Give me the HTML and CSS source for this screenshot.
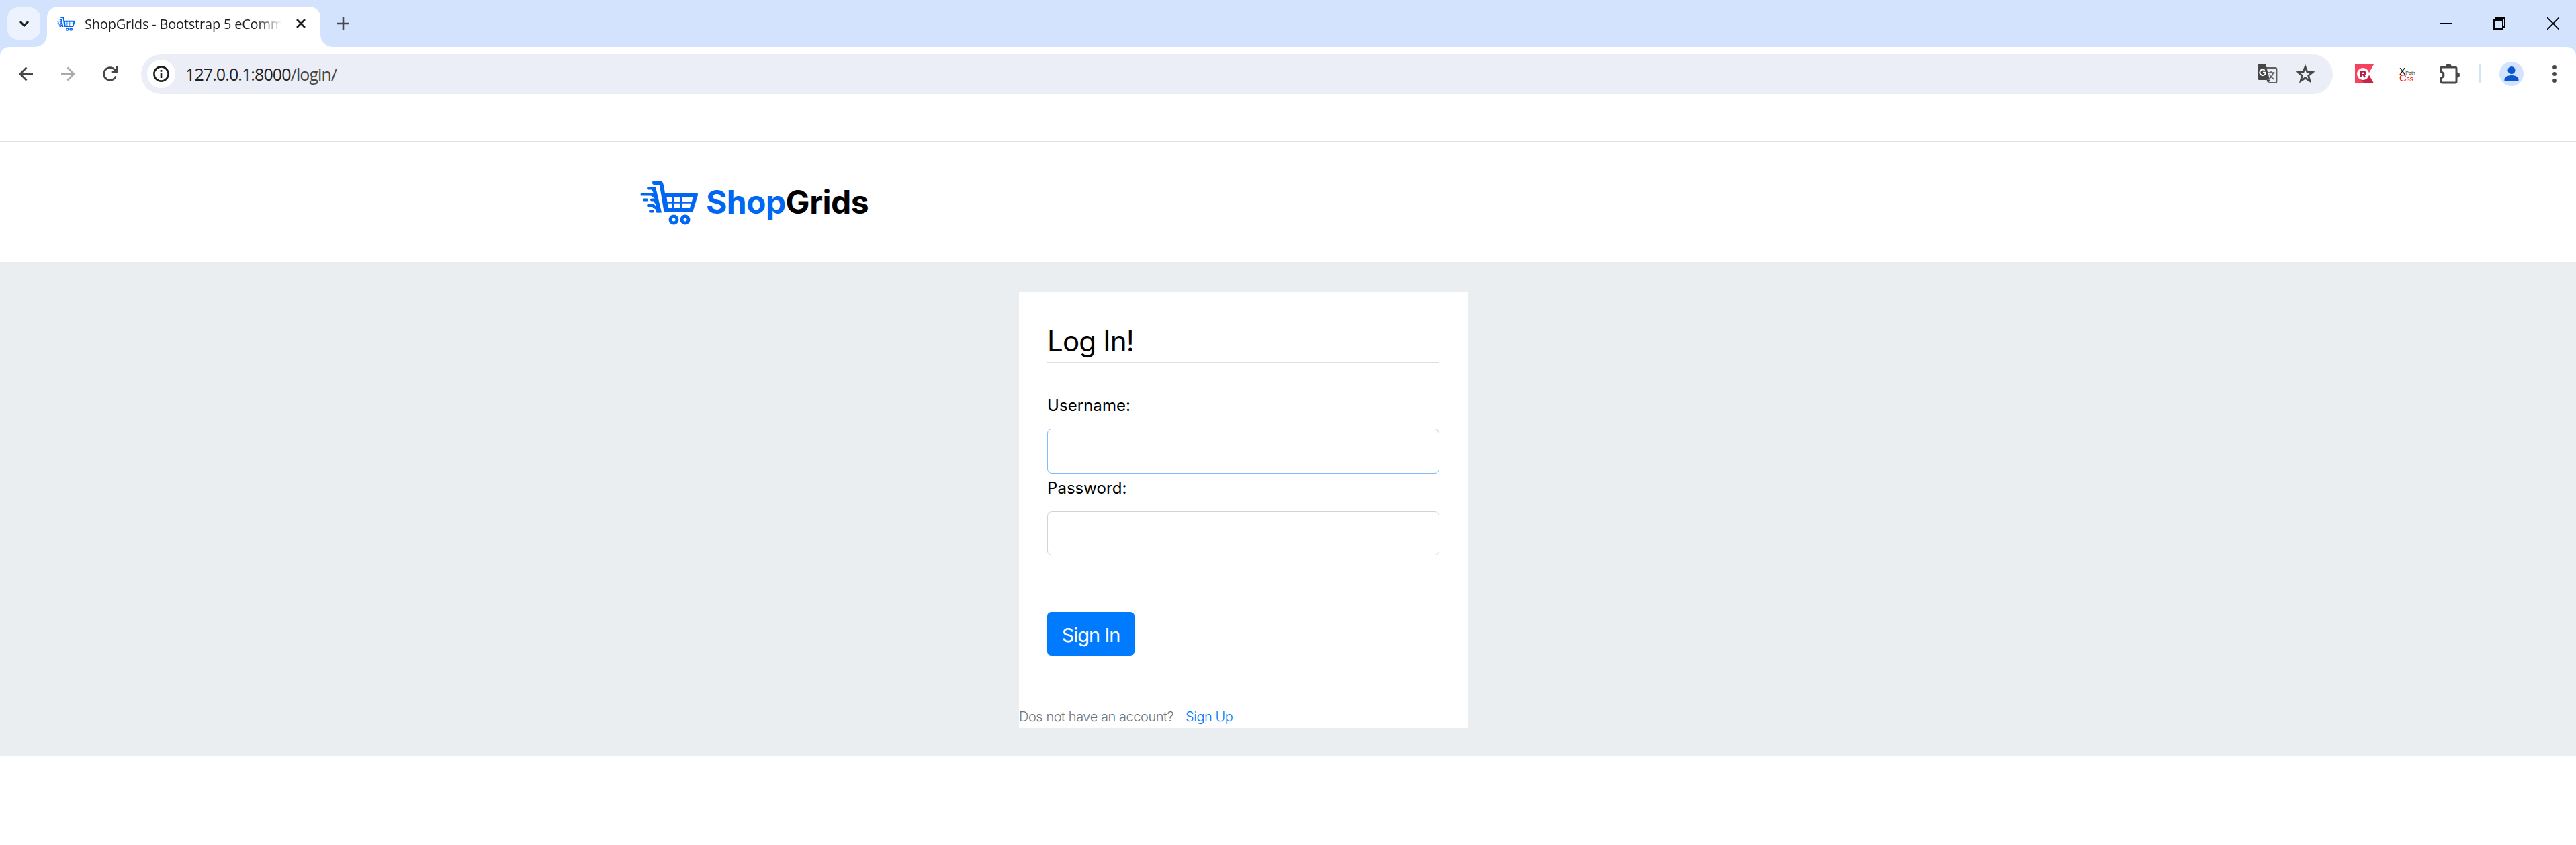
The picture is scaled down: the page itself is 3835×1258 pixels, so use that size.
FILE: index.html
```html
<!DOCTYPE html>
<html lang="en">
<head>
<meta charset="utf-8">
<title>ShopGrids - Bootstrap 5 eCommerce</title>
<link rel="stylesheet" href="styles.css">
</head>
<body>
<svg width="0" height="0" class="defs">
  <symbol id="cart" viewBox="0 0 86 66">
    <g fill="none" stroke="currentColor" stroke-linecap="round" stroke-linejoin="round">
      <path d="M21 3h9.500l1.500 4 6 36" stroke-width="6"/>
      <path d="M36 21h47l-7 23H39z" stroke-width="6"/>
      <path d="M37 32.500h42M49 22v22M61 22v22" stroke-width="2.600"/>
      <circle cx="50" cy="58" r="5" stroke-width="5"/>
      <circle cx="67" cy="58" r="5" stroke-width="5"/>
      <path d="M12 11.500h9M2.500 20.500h17M6 28.500h4M17 28.500h8M12 37h8M15 45.500h4M25 45.500h3" stroke-width="4"/>
    </g>
    <path fill="currentColor" d="M13 9.500h10l9 38h-6l-2-4-6-4.500 6-3-4-5 2-4-7-5.500 5-3-3-5z"/>
  </symbol>
</svg>
<div class="tabstrip">
  <div class="tab-search"><svg width="16" height="10" viewBox="0 0 16 10"><path d="M2 2l6 6 6-6" fill="none" stroke="#1f1f1f" stroke-width="3"/></svg></div>
  <div class="tab">
    <svg class="favicon" width="28" height="21"><use href="#cart"/></svg>
    <span class="tab-title">ShopGrids - Bootstrap 5 eComm</span>
    <svg width="14" height="14" viewBox="0 0 14 14"><path d="M1 1l12 12M13 1L1 13" stroke="#1f1f1f" stroke-width="2.600"/></svg>
  </div>
  <svg class="new-tab" width="18" height="18" viewBox="0 0 18 18"><path d="M9 0v18M0 9h18" stroke="#474747" stroke-width="2.600"/></svg>
  <div class="window-controls">
    <svg width="18" height="18" viewBox="0 0 18 18"><path d="M0 9h18" stroke="#000" stroke-width="2"/></svg>
    <svg width="18" height="18" viewBox="0 0 18 18"><path d="M1 4h13v13H1zM4 4V1h13v13h-3" fill="none" stroke="#000" stroke-width="2"/></svg>
    <svg width="18" height="18" viewBox="0 0 18 18"><path d="M0 0l18 18M18 0L0 18" stroke="#000" stroke-width="1.800"/></svg>
  </div>
</div>
<div class="toolbar">
  <div class="nav">
    <svg width="22" height="22" viewBox="0 0 22 22"><path d="M21 11H3M11.500 1.500L2 11l9.500 9.500" fill="none" stroke="#474747" stroke-width="2.700"/></svg>
    <svg width="22" height="22" viewBox="0 0 22 22"><path d="M1 11h18M10.500 1.500L20 11l-9.500 9.500" fill="none" stroke="#a9a9a9" stroke-width="2.700"/></svg>
    <svg width="24" height="24" viewBox="0 0 24 24"><path d="M20.500 15.500a9.300 9.300 0 1 1-1.500-9.500l2 2M21.700 1v8.300h-8" fill="none" stroke="#474747" stroke-width="2.700"/></svg>
  </div>
  <div class="omnibox">
    <div class="site-info"><svg width="24" height="24" viewBox="0 0 24 24"><circle cx="12" cy="12" r="10.600" fill="none" stroke="#1f1f1f" stroke-width="2.600"/><path d="M12 10.500v7.500M12 6v2.800" stroke="#1f1f1f" stroke-width="2.600"/></svg></div>
    <div class="url">127.0.0.1:8000<span>/login/</span></div>
    <svg class="translate" width="30" height="30" viewBox="0 0 30 30">
      <path d="M12 6h14.500a2 2 0 0 1 2 2v18a2 2 0 0 1-2 2H17" fill="none" stroke="#5f5f5f" stroke-width="1.800"/>
      <path d="M2.500 0H12l6 23.500-4.500.5H2.500A2.500 2.500 0 0 1 0 21.500v-19A2.500 2.500 0 0 1 2.500 0zM13.500 24H19l-3.500 5z" fill="#474747"/>
      <path d="M10.700 9.700A4.300 4.300 0 1 0 12 12.800H8" fill="none" stroke="#fff" stroke-width="2"/>
      <path d="M15 13h10.500M20 10.500V13M23.500 13c-1 4-3.500 7-6 9M17.500 15.500c1.500 3 4 5.500 7 7.500" fill="none" stroke="#5f5f5f" stroke-width="1.600"/>
    </svg>
    <svg width="28" height="28" viewBox="0 0 28 28"><path d="M14 3.500l2.900 7.400 8 .5-6.200 5 2.100 7.900L14 20l-6.800 4.300 2.100-7.900-6.200-5 8-.5z" fill="none" stroke="#474747" stroke-width="2.800"/></svg>
  </div>
  <div class="extensions">
    <svg width="28" height="28" viewBox="0 0 28 28"><path d="M0 0h28l-8 14 8 14H0z" fill="#f5425f"/><path d="M5 19l9 9h14l-7-12z" fill="#c32646"/><circle cx="12" cy="14" r="9" fill="#fff"/><path d="M9 19v-8.500h4a2.300 2.300 0 0 1 0 4.600H9M12.500 15l2.500 4" fill="none" stroke="#b51f40" stroke-width="2.400"/></svg>
    <div class="xpath"><div><b>X</b>Path</div><div class="css"><b>C</b>ss</div></div>
    <svg class="puzzle" width="30" height="30" viewBox="0 0 30 30"><path d="M3.500 5h20a1.500 1.500 0 0 1 1.500 1.500v20a1.500 1.500 0 0 1-1.500 1.500h-20A1.500 1.500 0 0 1 2 26.500V21q4-1 4-4.500T2 12V6.500A1.500 1.500 0 0 1 3.500 5z" fill="none" stroke="#474747" stroke-width="3"/><path d="M9.500 4a4 4 0 0 1 8 0zM26 12.500a4 4 0 0 1 0 8z" fill="#474747"/></svg>
    <i class="divider"></i>
    <svg class="avatar" width="36" height="36" viewBox="0 0 36 36"><circle cx="18" cy="18" r="18" fill="#d3e3fd"/><circle cx="18" cy="12.500" r="5.500" fill="#0b57d0"/><path d="M7.500 29v-3c0-4 6-6 10.500-6s10.500 2 10.500 6v3z" fill="#0b57d0"/></svg>
    <svg width="6" height="26" viewBox="0 0 6 26" fill="#474747"><circle cx="3" cy="3" r="2.900"/><circle cx="3" cy="13" r="2.900"/><circle cx="3" cy="23" r="2.900"/></svg>
  </div>
</div>
<header class="site-header">
  <a class="logo"><svg width="86" height="66"><use href="#cart"/></svg><span class="shop">Shop</span><span class="grids">Grids</span></a>
</header>
<main class="account">
  <section class="card">
    <form class="card-body">
      <h3>Log In!</h3>
      <label for="user">Username:</label>
      <input id="user" class="focused" type="text">
      <label for="pass">Password:</label>
      <input id="pass" type="password">
      <button type="button"><span>Sign In</span></button>
    </form>
    <footer><span class="ask">Dos not have an account?</span><a>Sign Up</a></footer>
  </section>
</main>
</body>
</html>
```
FILE: styles.css
```css
* { box-sizing: border-box; }
body { margin: 0; background: #fff; font-family: Inter, sans-serif; color: #000; height: 1258px; overflow: hidden; }
svg { display: block; flex: none; }
.defs { position: absolute; }
.tabstrip { display: flex; align-items: center; height: 70px; background: #d3e3fd; padding-left: 11px; }
.tab-search { width: 49px; height: 48px; border-radius: 16px; background: #ecf3fe; display: flex; align-items: center; justify-content: center; }
.tab { position: relative; display: flex; align-items: center; align-self: flex-end; width: 407px; height: 60px; margin-left: 10px; padding: 0 22px 10px 14px; background: #fff; border-radius: 16px 16px 0 0; }
.tab::before, .tab::after { content: ""; position: absolute; bottom: 0; width: 18px; height: 18px; }
.tab::before { left: -18px; background: radial-gradient(circle at 0 0, transparent 17.5px, #fff 18px); }
.tab::after { right: -18px; background: radial-gradient(circle at 100% 0, transparent 17.5px, #fff 18px); }
.favicon, .logo svg { color: #0167f3; }
.tab-title { width: 294px; margin: 0 21px 0 14px; overflow: hidden; white-space: nowrap; font: 20px "Open Sans", sans-serif; letter-spacing: -0.2px; color: #1f1f1f; -webkit-mask-image: linear-gradient(90deg, #000 255px, transparent 294px); mask-image: linear-gradient(90deg, #000 255px, transparent 294px); }
.new-tab { margin-left: 25px; }
.window-controls { display: flex; gap: 62px; margin-left: auto; padding-right: 25px; }
.toolbar { position: relative; display: flex; align-items: center; height: 80px; background: linear-gradient(#d3e3fd 14px, #fff 14px); padding-left: 28px; }
.toolbar::before { content: ""; position: absolute; inset: 0; background: #fff; border-radius: 14px 14px 0 0; }
.toolbar > * { position: relative; }
.nav { display: flex; align-items: center; gap: 40px; width: 182px; }
.omnibox { display: flex; align-items: center; width: 3263px; height: 59px; border-radius: 30px; background: #ebeef7; padding: 0 27px 0 9px; }
.site-info { width: 42px; height: 42px; border-radius: 50%; background: #fff; display: flex; align-items: center; justify-content: center; }
.url { margin-left: 15px; font: 25px "Open Sans", sans-serif; letter-spacing: -0.9px; color: #1f1f1f; }
.url span { color: #474747; }
.translate { margin: 0 27px 0 auto; }
.extensions { display: flex; align-items: center; padding-left: 33px; }
.xpath { width: 23px; margin-left: 38px; font: 7px/12px "Liberation Sans", sans-serif; color: #333; white-space: nowrap; }
.xpath div { height: 10px; }
.xpath b { font-weight: 400; font-size: 14px; color: #000; }
.xpath .css { font-size: 10px; color: #f00; }
.xpath .css b { color: #f00; font-size: 15px; }
.puzzle { margin-left: 37px; }
.divider { width: 3px; height: 28px; margin-left: 28px; background: #d3e3fd; border-radius: 1px; }
.avatar { margin: 0 43px 0 28px; }
.site-header { margin-top: 60px; height: 180px; border-top: 2px solid #dfdfdf; padding: 57px 0 0 953px; }
.logo { display: flex; width: max-content; font-size: 48px; font-weight: 700; line-height: 63px; }
.logo .shop { margin-left: 12px; color: #0167f3; letter-spacing: -0.6px; }
.logo .grids { letter-spacing: -0.5px; }
.account { display: flex; align-items: flex-start; height: 736px; background: #ebeef1; padding: 44px 0 0 1517px; }
.card { width: 668px; height: 650px; background: #fff; }
.card-body { display: flex; flex-direction: column; height: 584px; padding: 42px; }
h3 { margin: 0 0 40px; height: 64px; border-bottom: 1px solid #dfdfdf; font-size: 42px; line-height: 63px; font-weight: 400; letter-spacing: -0.8px; }
label { font-size: 24px; line-height: 47px; height: 58px; letter-spacing: 0.05px; }
input { width: 584px; height: 66px; flex: none; border: 1px solid #ced4da; border-radius: 7px; background: #fff; outline: 0; }
input.focused { height: 67px; border-color: #80bdff; margin-bottom: -2px; }
button { width: 130px; height: 65px; flex: none; margin-top: 84px; border: 0; border-radius: 6px; background: #007bff; color: #fff; font: 29px Inter, sans-serif; letter-spacing: -1px; padding: 3px 0 0; white-space: nowrap; }
footer { border-top: 1px solid #dee2e6; padding-top: 33px; display: flex; gap: 18px; font-size: 20px; font-weight: 300; line-height: 30px; letter-spacing: -0.45px; color: #6c757d; }
footer a { color: #007bff; }
```
